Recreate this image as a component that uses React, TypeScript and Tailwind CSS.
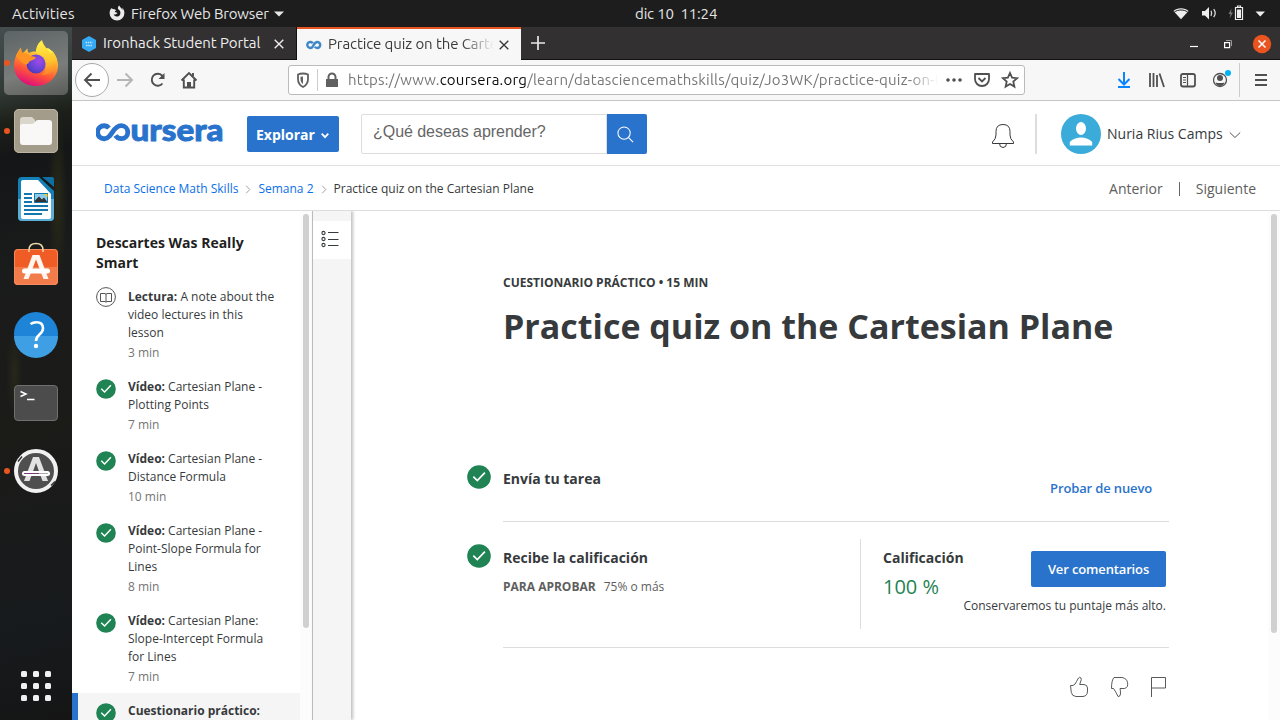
import type { ReactNode } from "react";

const UI = "font-['Ubuntu','Noto_Sans',sans-serif]";

function Check({ className }: { className: string }) {
  return (
    <svg viewBox="0 0 24 24" className={className}>
      <circle cx="12" cy="12" r="11.8" fill="#1f8354" />
      <path d="M6.3 11.6l4 4 7.6-8" fill="none" stroke="#fff" strokeWidth="1.7" />
    </svg>
  );
}

function TopBar() {
  return (
    <div className={`flex h-[27px] w-full shrink-0 items-center bg-[#1d1d1d] text-[15px] leading-[27px] text-[#e6e6e6] ${UI}`}>
      <div className="flex w-[109px] pl-3">
        <span className="tracking-[0.1px]">Activities</span>
      </div>
      <svg viewBox="0 0 16 16" className="-mt-[2px] h-4 w-4">
        <path d="M2.2 3.2C1.2 4.700.6 6.300.6 8.200a7.400 7.400 0 0 0 14.800-.2c0-2-.8-4-2.400-5.400.5 1 .6 1.800.5 2.500C12.700 3 11 2.200 10.300.4 9 1.400 8.600 2.900 9.200 4.300c1.600.8 2.400 2.200 2.200 4A3.500 3.500 0 0 1 4.600 9.200c.7.5 1.800.5 2.700-.2.6-.4 1.200-.3 1-.9-.4-.8-1.500-.5-2.200-1C5.700 6.600 6 6 7.200 5.600 6.700 4.900 6 4.200 4.800 4.300 3.700 4 3 3.600 2.200 3.200z" fill="#ececec" />
      </svg>
      <span className="ml-[6px] w-[138px] tracking-[-0.17px] whitespace-nowrap">Firefox Web Browser</span>
      <svg viewBox="0 0 10 6" className="ml-[5px] h-[6px] w-[10px]"><path d="M0 .5h10L5 5.500z" fill="#e6e6e6" /></svg>
      <span className="ml-[351px] w-[84px] tracking-[-0.15px] whitespace-pre">dic 10  11:24</span>
      <svg viewBox="0 0 110 20" className="ml-[446px] h-5 w-[110px] shrink-0">
        <g transform="translate(1 -.5)">
          <path d="M7.500 7.500C11 3.900 19 3.900 22.500 7.500L15 15.800z" fill="#eee" />
          <path d="M8.300 8.600C12 5.800 18 5.800 21.700 8.600" fill="none" stroke="#1d1d1d" strokeWidth="1" />
          <path d="M36 7.500h3l4-4v12.500l-4-4h-3z" fill="#eee" />
          <path d="M45 7.200q1.500 2.600 0 5.200M47.700 5.700q3 4 0 8" fill="none" stroke="#ddd" strokeWidth="1.300" />
          <path d="M65.500 5l-3 5.500h2l-1 4.500 3.500-6h-2z" fill="#777" />
          <path d="M69.500 4h7v12h-7zM71.500 2.500h3v1.500h-3z" fill="none" stroke="#eee" strokeWidth="1.200" />
          <path d="M71 6h4v8.500h-4z" fill="#eee" />
          <path d="M89.500 8h9.500l-4.750 5z" fill="#eee" />
        </g>
      </svg>
    </div>
  );
}

function Firefox() {
  return (
    <svg viewBox="0 0 48 48" className="h-12 w-12">
      <defs>
        <linearGradient id="fa" x1=".8" y1=".1" x2=".4" y2="1">
          <stop offset="0" stopColor="#fff44f" /><stop offset=".3" stopColor="#ffa52a" /><stop offset=".65" stopColor="#ff5438" /><stop offset="1" stopColor="#e0107a" />
        </linearGradient>
        <linearGradient id="fy" x1=".5" y1="0" x2=".6" y2="1">
          <stop offset="0" stopColor="#fff14a" /><stop offset=".6" stopColor="#ffc52c" /><stop offset="1" stopColor="#ff7a2c" />
        </linearGradient>
        <radialGradient id="fp" cx=".65" cy=".35" r=".7"><stop offset="0" stopColor="#a04ae8" /><stop offset=".6" stopColor="#6b45d8" /><stop offset="1" stopColor="#4b3ab8" /></radialGradient>
      </defs>
      <path d="M4 17C5 14.500 6 12 9 8.500c0 2 .3 3.500 1.500 5.500 2-.8 3-3 5-4.500 0 2 0 3 1.500 4.500 3-1.500 5-1.500 7.500-1.300L36 9c6 4 10 10 10 17.500C46 38 36.500 47 24 47S2 38 2 26.500C2 23 2.800 20 4 17z" fill="url(#fa)" />
      <path d="M30 1c-4 3-6.500 8-6 13 6 1 10.500 6 10 12 0 5-2 8-5 10 9 1 16-5 16-12 0-5-2-9.500-5-12.500 0 1.500-.5 2.500-1 3.500C35 9.500 31 6 30 1z" fill="url(#fy)" />
      <circle cx="24" cy="25" r="9.500" fill="url(#fp)" />
      <path d="M4 17c1-3 3-5 5-8 0 2 .5 4 2 5.500 3.500-.5 5.500.5 7 2.500 2 .2 4.500.5 6 1.500-1.500 2.500-4.500 2.500-6.500 4-1.500 2-1 2.500-3.500 3-4-1-6-4.500-10-8.500z" fill="#ff9424" />
    </svg>
  );
}

function DockItem({ children, running, active, className }: { children: ReactNode; running?: boolean; active?: boolean; className: string }) {
  return (
    <div className={`flex w-full shrink-0 items-center ${className}`}>
      <span className={`ml-1 h-[6px] w-[6px] shrink-0 rounded-full ${running ? "bg-[#e95420]" : ""} ${active ? "z-10" : ""}`} />
      <div className={`flex h-16 w-16 shrink-0 items-center justify-center rounded-[5px] -ml-[6px] ${active ? "bg-[linear-gradient(165deg,#5d6466,#7a7d7b_60%,#5b5c58)]" : ""}`}>{children}</div>
    </div>
  );
}

function Dock() {
  return (
    <div className="flex w-[72px] shrink-0 flex-col bg-[radial-gradient(ellipse_at_80%_25%,#292a17_0%,transparent_12%),radial-gradient(ellipse_at_20%_50%,#27271b_0%,transparent_10%),linear-gradient(168deg,#454d4e_0px,#343c3a_60px,#1c2019_95px,#141617_130px,#1a1b1b_240px,#1b1b18_400px,#171a1d_600px,#151515_693px)] pt-[3px]">
      <DockItem running active className="h-[65px]"><Firefox /></DockItem>
      <DockItem running className="h-[71px]">
        <svg viewBox="0 0 48 48" className="h-12 w-12">
          <rect x="2" y="2" width="44" height="44" rx="5" fill="#a49c8b" />
          <rect x="2.500" y="2.500" width="43" height="43" rx="4.500" fill="none" stroke="#bdb5a2" />
          <path d="M8 13q0-3 3-3h9l3 3v7H8z" fill="#dad6cc" />
          <path d="M8 19q0-2 2-2h9q3 0 4-2t3-2h11q3 0 3 3v19q0 3-3 3H11q-3 0-3-3z" fill="#f9f8f6" />
        </svg>
      </DockItem>
      <DockItem className="h-[66px]">
        <svg viewBox="0 0 48 48" className="h-12 w-12">
          <path d="M10 2h17l15 14v26q0 4-4 4H10q-4 0-4-4V6q0-4 4-4z" fill="#1380b8" />
          <path d="M6 24h36v18q0 4-4 4H10q-4 0-4-4z" fill="#5cb0d8" />
          <path d="M30 2h10q2 0 2 2v8z" fill="#0f6ea2" />
          <path d="M11 5h15l13 14v23q0 2-2 2H11q-2 0-2-2V7q0-2 2-2z" fill="#fff" />
          <path d="M12 19h8M12 23h8M12 27h8M12 31h24M12 35h24M12 39h18" stroke="#1478ac" strokeWidth="1.800" />
          <rect x="22.500" y="18.500" width="13" height="9" fill="#8ccbea" stroke="#1478ac" />
          <path d="M23 27v-1.500l4-4 3 3 2-2 3 4v.5z" fill="#333" /><path d="M32 19h3.500v3.500z" fill="#f7c91a" />
        </svg>
      </DockItem>
      <DockItem className="h-[66px]">
        <svg viewBox="0 0 48 48" className="h-12 w-12">
          <rect x="2" y="8" width="44" height="36" rx="4" fill="#ef5c25" />
          <path d="M2 26h44v14q0 4-4 4H6q-4 0-4-4z" fill="#f27b4c" />
          <rect x="2.500" y="8.500" width="43" height="35" rx="3.500" fill="none" stroke="#f58a5e" />
          <path d="M17 11V9q0-6.500 7-6.500T31 9v2" fill="none" stroke="#ead9a8" strokeWidth="1.500" />
          <path d="M11.500 38L20.500 14h7l9 24h-5L24 18.500 16.500 38z" fill="#fff4ee" />
          <rect x="10" y="27.500" width="28" height="5" rx="2.500" fill="#fff" />
        </svg>
      </DockItem>
      <DockItem className="h-[72px]">
        <svg viewBox="0 0 48 48" className="h-12 w-12">
          <circle cx="24" cy="24" r="22" fill="#1d84d8" />
          <path d="M2 26h44a22 22 0 0 1-44 0z" fill="#3f9fe4" />
          <path d="M18.500 14q2.500-1.800 6-1.800 6.500 0 6.500 6 0 3.300-3.500 6.300Q24 27.500 24 31" fill="none" stroke="#fff" strokeWidth="2.600" /><circle cx="24" cy="36" r="2.200" fill="#fff" />
        </svg>
      </DockItem>
      <DockItem className="h-[65px]">
        <svg viewBox="0 0 48 48" className="h-12 w-12">
          <rect x="2.500" y="6.500" width="43" height="35" rx="3.500" fill="#4c4c4c" stroke="#707070" />
          <path d="M8.500 12.500l5.500 2.500-5.500 2.500M15 20.500h7.500" fill="none" stroke="#fff" strokeWidth="1.500" />
        </svg>
      </DockItem>
      <DockItem running className="h-[71px]">
        <svg viewBox="0 0 48 48" className="h-12 w-12">
          <circle cx="24" cy="24" r="20" fill="#4f4f4f" stroke="#f1f1f1" strokeWidth="4" />
          <path d="M6 14.500l4-5M39 38.500l4-4" stroke="#333" strokeWidth="1.500" />
          <path d="M12 34L21 10h6l9 24h-5.500L24 16l-6.500 18z" fill="#e2e2e2" />
          <rect x="10" y="24" width="28" height="5" rx="2.500" fill="#fff" /><path d="M12 26.500h15" stroke="#7a3b80" strokeWidth="1" /><path d="M27 26.500h9" stroke="#aaa" />
        </svg>
      </DockItem>
      <div className="flex grow items-end pb-[18px] pl-5">
        <svg viewBox="0 0 32 32" className="h-8 w-8" fill="#f0f0f0">
          {[1, 13, 25].map((y) => [1, 13, 25].map((x) => <rect key={`${x}-${y}`} x={x} y={y} width="6" height="6" rx="1.500" />))}
        </svg>
      </div>
    </div>
  );
}

function Close({ className }: { className: string }) {
  return <svg viewBox="0 0 10 10" className={className}><path d="M.7.700l8.600 8.600M9.300.7L.7 9.300" fill="none" stroke="currentColor" strokeWidth="1.400" /></svg>;
}

function Tabs() {
  return (
    <div className={`flex h-[33px] shrink-0 bg-[#323031] text-[15px] ${UI}`}>
      <div className="flex w-[225px] items-center border-r border-b border-[#111] pt-px pl-[9px] text-[#eee]">
        <svg viewBox="0 0 16 16" className="h-4 w-4"><path d="M8 0l7 4v8l-7 4-7-4V4z" fill="#34a9f4" /><path d="M4.500 6.500h7M5 9.500h6" stroke="#bfe3fb" strokeWidth="1.400" strokeDasharray="1.500 .7" /></svg>
        <span className="ml-[6px] w-[160px] tracking-[-0.08px] whitespace-nowrap">Ironhack Student Portal</span>
        <Close className="ml-[11px] h-[10px] w-[10px]" />
      </div>
      <div className="flex w-56 items-center border-t-2 border-[#e95420] bg-[#f7f7f7] pl-[9px] text-[#3a3a3a]">
        <svg viewBox="0 0 32 20" className="h-[10px] w-4" fill="none" stroke="#3f88c8" strokeWidth="4.800"><path d="M13.500 6.500A6 6 0 1 0 12.500 14.500C15 12 16.500 4 22.500 4a6 6 0 1 1 0 12Q19 16 17.500 13.500" /></svg>
        <span className="-mt-px ml-[6px] w-[166px] overflow-hidden tracking-[-0.1px] whitespace-nowrap [mask-image:linear-gradient(to_right,#000_134px,transparent_166px)]">Practice quiz on the Cartesian</span>
        <Close className="ml-[5px] h-[10px] w-[10px]" />
      </div>
      <div className="flex grow items-center border-b border-[#111] pl-[10px] text-[#e8e8e8]">
        <svg viewBox="0 0 14 14" className="h-[14px] w-[14px]"><path d="M7 0v14M0 7h14" stroke="currentColor" strokeWidth="1.700" /></svg>
        <svg viewBox="0 0 90 20" className="mt-px ml-auto h-5 w-[90px]">
          <path d="M0 12.500h8" stroke="#fff" strokeWidth="1.200" />
          <path d="M34.600 8.600h5v5h-5z" fill="none" stroke="#fff" strokeWidth="1.200" /><path d="M36 6.500h5.500V12" fill="none" stroke="#999" />
          <circle cx="72" cy="10" r="9.200" fill="#e95420" /><path d="M68.500 6.500l7 7M75.500 6.500l-7 7" stroke="#fff" strokeWidth="1.500" />
        </svg>
      </div>
    </div>
  );
}

function Toolbar() {
  return (
    <div className={`flex h-[41px] shrink-0 items-center border-b border-[#c6c6c6] bg-[#f7f7f7] ${UI}`}>
      <svg viewBox="0 0 130 40" className="h-10 w-[130px] shrink-0" fill="none" stroke="#505050" strokeWidth="1.900">
        <circle cx="20" cy="20" r="16.500" fill="#fff" stroke="#a9a9a9" strokeWidth="1" />
        <path d="M28 20H13M19.500 13.500L13 20l6.500 6.500" />
        <path d="M45 20h15M53.500 13.500L60 20l-6.500 6.500" stroke="#b5b5b5" />
        <path d="M90.500 23.500A6 6 0 1 1 90 15.500l1.500 1.800" /><path d="M92.500 13v6h-6z" fill="#505050" stroke="none" />
        <path d="M109.500 20.500l7.500-7.500 7.500 7.500M111.800 19.500v8h10.400v-8M121 16v-3" /><path d="M115 22h4v6h-4z" fill="#505050" stroke="none" />
      </svg>
      <div className="ml-[86px] flex h-[30px] w-[737px] shrink-0 items-center rounded-[3px] border border-[#bbb] bg-white">
        <svg viewBox="0 0 54 28" className="h-7 w-[54px] shrink-0" fill="none">
          <path d="M14 7.500c2 0 4 .5 5 1v4.500c0 4-2 6.500-5 8-3-1.500-5-4-5-8V8.500c1-.5 3-1 5-1z" stroke="#606060" strokeWidth="1.800" /><path d="M14 10.500v7.500c-1.800-1.300-2.500-3-2.500-5v-2.200z" fill="#606060" />
          <path d="M28.500 3v22" stroke="#ccc" />
          <path d="M37 13h12v8H37z" fill="#606060" /><path d="M39.500 14v-3a3.500 3.500 0 0 1 7 0v3" stroke="#606060" strokeWidth="2" />
        </svg>
        <span className="mt-px ml-[5px] w-[592px] shrink-0 overflow-hidden text-[15px] tracking-[0.22px] whitespace-nowrap text-[#777] [mask-image:linear-gradient(to_right,#000_560px,transparent_590px)]">https://www.<span className="text-[#0c0c0d]">coursera.org</span>/learn/datasciencemathskills/quiz/Jo3WK/practice-quiz-on-the</span>
        <svg viewBox="0 0 76 28" className="ml-[4px] h-7 w-[76px] shrink-0" fill="none" stroke="#505050" strokeWidth="1.800">
          <path d="M4 14h.010M10 14h.010M16 14h.010" strokeLinecap="round" strokeWidth="3.600" />
          <path d="M31 8h14v5c0 4-3 7-7 7s-7-3-7-7z" strokeLinejoin="round" /><path d="M34.500 12l3.500 3.500L41.500 12" />
          <path d="M66 7l2.100 4.700 5 .5-3.800 3.400 1.100 5-4.400-2.600-4.400 2.600 1.100-5-3.800-3.400 5-.5z" />
        </svg>
      </div>
      <svg viewBox="0 0 164 40" className="ml-[90px] h-10 w-[164px] shrink-0" fill="none" stroke="#505050" strokeWidth="1.800">
        <path d="M9 12v12M3.500 19L9 24.500 14.500 19M3 27h12" stroke="#0a84ff" strokeWidth="2" />
        <path d="M35 13v14M38.500 13v14M42 15v12M44.500 13.500L49 27" />
        <rect x="66" y="14" width="14" height="12.500" rx="2" /><path d="M72.500 14v12M68 17.500h3M68 20h3M68 22.500h3" strokeWidth="1.200" />
        <circle cx="105" cy="20" r="6.500" strokeWidth="1.300" /><circle cx="105" cy="18" r="3" fill="#505050" stroke="none" /><path d="M100.500 22.500q4.500 1 9 0-1 3.500-4.500 3.500t-4.500-3.500z" fill="#505050" stroke="none" />
        <circle cx="113" cy="13" r="3" fill="#00b3f4" stroke="none" />
        <path d="M124.500 3v34" stroke="#ccc" strokeWidth="1" />
        <path d="M140 15h12M140 20h12M140 25h12" />
      </svg>
    </div>
  );
}

function Header() {
  return (
    <div className="flex h-[65px] shrink-0 items-center border-b border-[#e1e1e1] bg-white text-[#373a3c]">
      <svg viewBox="0 0 130 26" className="ml-6 h-[26px] w-[130px] shrink-0" role="img">
        <path d="M13 8A6.500 6.500 0 1 0 13 16.500C16.500 13.500 18.500 5.700 25.300 5.700a6.500 6.500 0 1 1 0 13Q21.500 18.600 19.500 15.500" fill="none" stroke="#2a73cc" strokeWidth="4.800" />
        <text x="34.500" y="21" textLength="93" lengthAdjust="spacingAndGlyphs" fill="#2a73cc" stroke="#2a73cc" strokeWidth=".9" fontFamily="Lato" fontWeight="900" fontSize="31">ursera</text>
      </svg>
      <div className="ml-[21px] mt-[2px] flex h-9 w-[92px] shrink-0 items-center rounded-[2px] bg-[#2a73cc] pl-[9px] text-[14px] font-bold text-white">
        Explorar
        <svg viewBox="0 0 8 6" className="ml-[6px] mt-[3px] h-[6px] w-2"><path d="M.7.700L4 4.200 7.300.7" fill="none" stroke="#fff" strokeWidth="1.800" /></svg>
      </div>
      <div className="ml-[22px] mt-[2px] flex h-10 w-[246px] shrink-0 rounded-l-[2px] border border-[#ddd] pt-[5px] pl-[11px] font-['Liberation_Sans',sans-serif] text-[16px] leading-6 tracking-[-0.04px] text-[#666]">¿Qué deseas aprender?</div>
      <div className="mt-[2px] flex h-10 w-10 shrink-0 items-center justify-center rounded-r-[2px] bg-[#2a73cc]">
        <svg viewBox="0 0 18 18" className="-ml-1 h-[17px] w-[17px]" fill="none" stroke="#fff" strokeWidth="1.100"><circle cx="7.500" cy="7.500" r="6.500" /><path d="M12 12l5 5" /></svg>
      </div>
      <svg viewBox="0 0 24 26" className="mt-[5px] ml-[344px] h-[26px] w-6 shrink-0" fill="none" stroke="#373a3c"><path d="M1.500 20.500v-1.500q3.500-3 3.500-7V8.500q0-7 7-7t7 7V12q0 4 3.500 7v1.500zM8.500 20.500q0 4 3.500 4t3.500-4" /></svg>
      <div className="mt-[2px] ml-5 h-10 w-[2px] shrink-0 bg-[#ddd]" />
      <svg viewBox="0 0 40 40" className="mt-[2px] ml-6 h-10 w-10 shrink-0"><circle cx="20" cy="20" r="20" fill="#3bacda" /><ellipse cx="20" cy="14.500" rx="5" ry="6.500" fill="#fff" /><path d="M8.800 31.500v-3.500Q13 23.500 20 23.500t11.200 4.500v3.500z" fill="#fff" /></svg>
      <span className="ml-[6px] w-[118px] text-[14px] whitespace-nowrap">Nuria Rius Camps</span>
      <svg viewBox="0 0 12 8" className="mt-[3px] ml-1 h-2 w-3"><path d="M.8 1.500L6 6.500l5.200-5" fill="none" stroke="#555" /></svg>
    </div>
  );
}

function Chevron() {
  return <svg viewBox="0 0 6 10" className="mt-[2px] mx-[7px] h-[9px] w-[6px]"><path d="M1 .8L5 5 1 9.200" fill="none" stroke="#999" /></svg>;
}

function Crumbs() {
  return (
    <div className="flex h-[45px] shrink-0 items-center border-b border-[#ddd] bg-white pt-px pl-8 text-[12px]">
      <span className="whitespace-nowrap text-[#0c6fe8]">Data Science Math Skills</span><Chevron />
      <span className="whitespace-nowrap text-[#0c6fe8]">Semana 2</span><Chevron />
      <span className="whitespace-nowrap text-[#373a3c]">Practice quiz on the Cartesian Plane</span>
      <div className="-mt-px ml-auto flex items-center pr-6 text-[14px] text-[#5e5e5e]"><span>Anterior</span><span className="mx-4 mt-px h-[14px] w-px bg-[#666]" /><span>Siguiente</span></div>
    </div>
  );
}

const lessons = [
  { kind: "Lectura:", title: " A note about the video lectures in this lesson", time: "3 min" },
  { kind: "Vídeo:", title: " Cartesian Plane - Plotting Points", time: "7 min", done: true },
  { kind: "Vídeo:", title: " Cartesian Plane - Distance Formula", time: "10 min", done: true },
  { kind: "Vídeo:", title: " Cartesian Plane - Point-Slope Formula for Lines", time: "8 min", done: true },
  { kind: "Vídeo:", title: " Cartesian Plane: Slope-Intercept Formula for Lines", time: "7 min", done: true },
  { kind: "Cuestionario práctico:", title: " Practice quiz on the Cartesian Plane", time: "15 min", done: true, current: true },
];

function Sidebar() {
  return (
    <div className="flex w-[240px] shrink-0 overflow-hidden">
      <div className="w-[228px] shrink-0">
        <h2 className="mt-[22px] mb-[6px] pl-6 text-[14px] leading-5 font-bold text-[#1f1f1f]">Descartes Was Really<br />Smart</h2>
        {lessons.map((l, i) => (
          <div key={i} className={`flex border-l-[6px] pt-[9px] pb-[7px] pl-[18px] ${l.current ? "border-[#2a73cc] bg-[#f5f5f5]" : "border-transparent"}`}>
            {l.done ? <Check className="mt-px h-5 w-5 shrink-0" /> : (
              <svg viewBox="0 0 20 20" className="-mt-px h-5 w-5 shrink-0" fill="none" stroke="#555"><circle cx="10" cy="10" r="9.400" /><path d="M4.500 6.500H9l1 .8 1-.8h4.500v8H11l-1 .8-1-.8H4.500zM10 7v8" /></svg>
            )}
            <div className="ml-3 w-[150px] text-[12px] leading-[18px] text-[#373a3c]">
              <p><b>{l.kind}</b>{l.title}</p>
              <p className="pt-px leading-[19px] text-[#757575]">{l.time}</p>
            </div>
          </div>
        ))}
      </div>
      <div className="flex grow justify-center bg-[#fcfcfc] pt-[3px]"><div className="h-[414px] w-[6px] rounded-full bg-[#d0d0d0]" /></div>
    </div>
  );
}

function Main() {
  return (
    <div className="flex grow flex-col pl-[116px] text-[#373a3c]">
      <p className="mt-[62px] pl-9 text-[12px] leading-5 font-bold">CUESTIONARIO PRÁCTICO • 15 MIN</p>
      <h1 className="mt-[9px] pl-9 text-[34px] leading-[48px] font-bold whitespace-nowrap">Practice quiz on the Cartesian Plane</h1>
      <div className="mt-[102px] flex h-[70px]">
        <Check className="mt-[13px] h-6 w-6 shrink-0" />
        <div className="ml-3 flex w-[666px] justify-between border-b border-[#ddd]">
          <h3 className="mt-[17px] text-[14px] leading-5 font-bold">Envía tu tarea</h3>
          <span className="mt-[26px] mr-[17px] text-[13px] leading-5 font-semibold tracking-[-0.14px] text-[#2a73cc]">Probar de nuevo</span>
        </div>
      </div>
      <div className="flex h-[126px]">
        <Check className="mt-[22px] h-6 w-6 shrink-0" />
        <div className="ml-3 flex w-[666px] border-b border-[#ddd]">
          <div className="w-[357px] pt-[26px]">
            <h3 className="text-[14px] leading-5 font-bold">Recibe la calificación</h3>
            <p className="mt-[9px] text-[12px] leading-5 text-[#5e5e5e]"><b className="mr-2">PARA APROBAR</b>75% o más</p>
          </div>
          <div className="mt-[17px] flex h-[90px] w-[306px] justify-between border-l border-[#ddd] pl-[22px]">
            <div className="w-[80px] shrink-0 pt-[9px]">
              <h3 className="text-[14px] leading-5 font-bold">Calificación</h3>
              <p className="mt-[5px] text-[20px] leading-[28px] whitespace-nowrap text-[#1f8354]">100 %</p>
            </div>
            <div className="flex grow flex-col items-end pt-3">
              <div className="flex h-9 w-[135px] items-center justify-center rounded-[2px] bg-[#2a73cc] pt-px text-[13px] font-semibold tracking-[-0.14px] text-white">Ver comentarios</div>
              <p className="mt-[9px] text-[12px] leading-5 whitespace-nowrap">Conservaremos tu puntaje más alto.</p>
            </div>
          </div>
        </div>
      </div>
      <svg viewBox="0 0 100 24" className="mt-[27px] ml-[601px] h-6 w-[100px]" fill="none" stroke="#44474a" strokeWidth=".9" strokeLinejoin="round">
        <path d="M2.500 10.500H5Q7.500 9.500 8.500 6.500L10.500 3q1-1.500 2.500 0 .8 1.500-.5 4l-.8 2.500H16q3.500.5 3.500 3.500v3q0 5-4.500 5.500H8q-4-.3-4.700-4z" />
        <path d="M46 2.500h8q5 1 5.500 5 1 5-3 6H52q.5 2 .5 5.500-.5 3-2.500 2.500-2-4.500-4.500-8h-2q0-8.500 2.500-11z" />
        <path d="M83.500 22V2.500h14v10.500h-14" />
      </svg>
    </div>
  );
}

export default function App() {
  return (
    <div className="flex h-[720px] w-[1280px] flex-col overflow-hidden bg-white font-['Open_Sans',sans-serif]">
      <TopBar />
      <div className="flex h-[693px]">
        <Dock />
        <div className="flex w-[1208px] flex-col">
          <Tabs /><Toolbar /><Header /><Crumbs />
          <div className="flex min-h-0 grow overflow-hidden">
            <Sidebar />
            <div className="w-[39px] shrink-0 border-l border-[#bbb] bg-[#f5f5f5] pt-[10px] shadow-[2px_0_3px_rgba(0,0,0,0.25)]">
              <div className="flex h-[38px] items-center pb-[3px] pl-[7px] bg-white">
                <svg viewBox="0 0 20 20" className="h-5 w-5" fill="none" stroke="#373a3c" strokeWidth="1.100"><circle cx="3.500" cy="4" r="1.600" /><circle cx="3.500" cy="10" r="1.600" /><circle cx="3.500" cy="16" r="1.600" /><path d="M8 3.500H18.500M8 10.500H18.500M8 16.500H18.500" /></svg>
              </div>
            </div>
            <Main />
            <div className="flex w-3 shrink-0 justify-center bg-[#fcfcfc] pt-[3px]"><div className="h-[419px] w-[6px] rounded-full bg-[#d0d0d0]" /></div>
          </div>
        </div>
      </div>
    </div>
  );
}
